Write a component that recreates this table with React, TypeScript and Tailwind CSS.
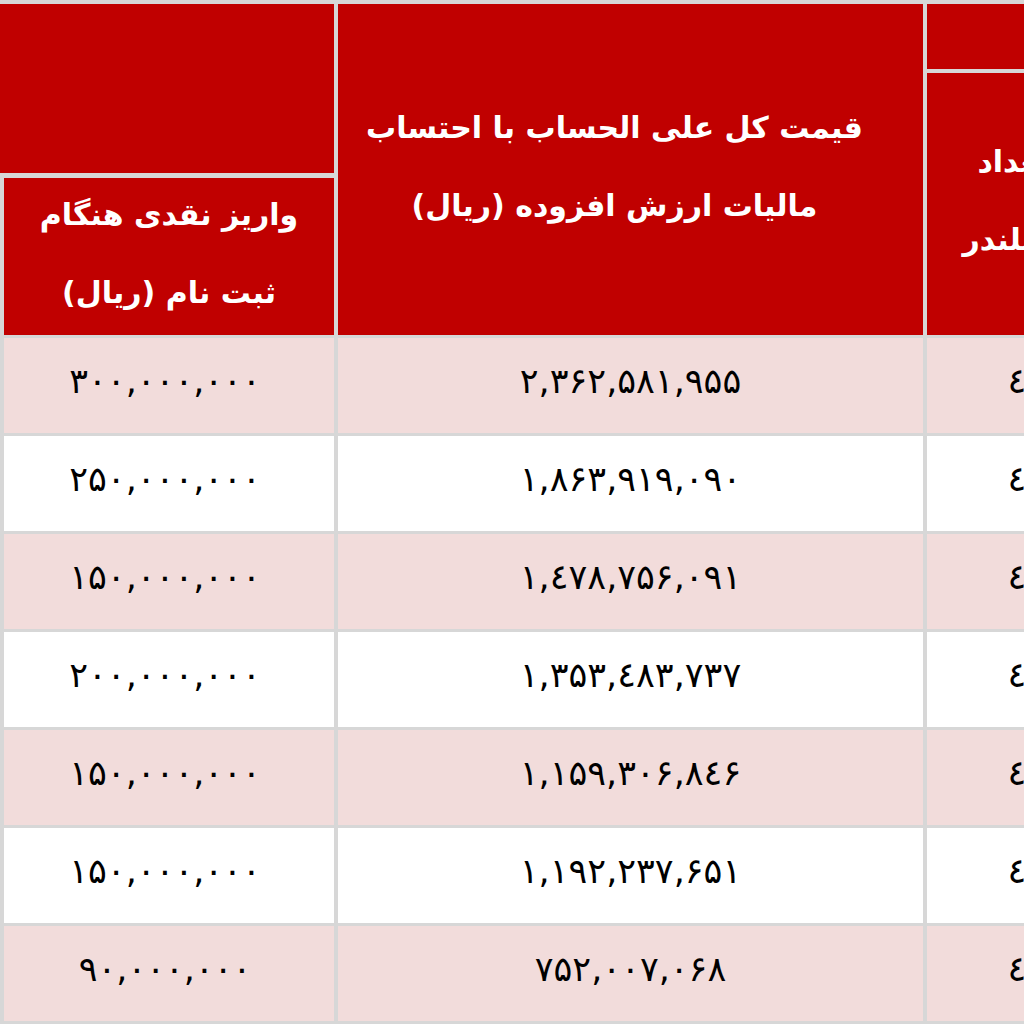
const RED = "bg-[#c00000]";

const rows = [
  { cash: "۳۰۰,۰۰۰,۰۰۰", total: "۲,۳۶۲,۵۸۱,۹۵۵" },
  { cash: "۲۵۰,۰۰۰,۰۰۰", total: "۱,۸۶۳,۹۱۹,۰۹۰" },
  { cash: "۱۵۰,۰۰۰,۰۰۰", total: "۱,٤۷۸,۷۵۶,۰۹۱" },
  { cash: "۲۰۰,۰۰۰,۰۰۰", total: "۱,۳۵۳,٤۸۳,۷۳۷" },
  { cash: "۱۵۰,۰۰۰,۰۰۰", total: "۱,۱۵۹,۳۰۶,۸٤۶" },
  { cash: "۱۵۰,۰۰۰,۰۰۰", total: "۱,۱۹۲,۲۳۷,۶۵۱" },
  { cash: "۹۰,۰۰۰,۰۰۰", total: "۷۵۲,۰۰۷,۰۶۸" },
];

function HeadText({ lines }: { lines: string[] }) {
  return (
    <div
      dir="rtl"
      className="text-center text-[30px] font-bold leading-[78px] text-white -mt-1.5"
    >
      {lines.map((l) => (
        <div key={l}>{l}</div>
      ))}
    </div>
  );
}

export default function App() {
  return (
    <div
      className="h-[1024px] w-[1024px] overflow-hidden bg-[#d7d7d7] pt-1"
      style={{ fontFamily: '"DejaVu Sans", sans-serif' }}
    >
      <div className="flex w-[1200px] flex-col gap-[3px]">
        {/* header */}
        <div className="flex h-[331px] gap-[4px]">
          <div className="flex w-[334px] flex-col gap-[5px]">
            <div className={`h-[169px] ${RED}`} />
            <div className={`ml-1 flex flex-1 items-center justify-center ${RED}`}>
              <HeadText lines={["واریز نقدی هنگام", "ثبت نام (ریال)"]} />
            </div>
          </div>
          <div className={`flex w-[585px] items-center justify-center pr-8 ${RED}`}>
            <HeadText
              lines={["قیمت کل علی الحساب با احتساب", "مالیات ارزش افزوده (ریال)"]}
            />
          </div>
          <div className="flex w-[176px] flex-col gap-[4px]">
            <div className={`h-[65px] ${RED} w-[300px]`} />
            <div className={`flex flex-1 items-center justify-center pr-1 ${RED}`}>
              <HeadText lines={["تعداد", "سیلندر"]} />
            </div>
          </div>
        </div>

        {/* body */}
        {rows.map((r, i) => {
          const bg = i % 2 === 0 ? "bg-[#f2dcdb]" : "bg-white";
          return (
            <div key={i} className="flex h-[95px] gap-[4px] text-[35px] text-black">
              <div className={`ml-1 flex w-[330px] items-center justify-center ${bg}`}>
                <span className="-ml-2 -mt-2">{r.cash}</span>
              </div>
              <div className={`flex w-[585px] items-center justify-center ${bg}`}>
                <span className="-mt-2">{r.total}</span>
              </div>
              <div className={`flex w-[176px] items-center justify-center ${bg}`}>
                <span className="-mt-2 ml-1">٤</span>
              </div>
            </div>
          );
        })}
      </div>
    </div>
  );
}
